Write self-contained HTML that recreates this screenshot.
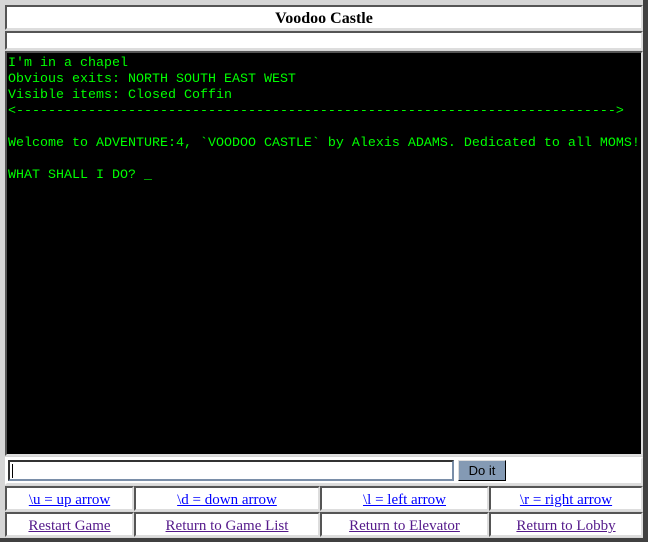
<!DOCTYPE html>
<html><head><style>
body{margin:0;width:648px;height:542px;background:#d6d6d6;position:relative;overflow:hidden;font-family:"Liberation Serif",serif}
.c{position:absolute;box-sizing:border-box;background:#fff;border-top:2px solid #555;border-left:2px solid #555;border-right:2px solid #ddd;border-bottom:2px solid #ddd}
.edgeR{position:absolute;left:643px;top:0;width:5px;height:542px;background:#404040}
.edgeB{position:absolute;left:0;top:538px;width:648px;height:4px;background:#404040}
.t{text-align:center;font-weight:bold;font-size:16px;line-height:24px}
pre{margin:0;position:absolute;left:8px;top:56px;color:#00ff00;font-family:"Liberation Mono",monospace;font-size:13.33px;line-height:16px}
.l{text-align:center;font-size:15px;line-height:25px}
a{color:#0000ff}
a.v{color:#551a8b}
</style></head><body>
<div class="c t" style="left:5px;top:5px;width:638px;height:25px">Voodoo Castle</div>
<div class="c" style="left:5px;top:31px;width:638px;height:19px"></div>
<div class="c" style="left:5px;top:51px;width:638px;height:405px;background:#000"></div>
<pre>I'm in a chapel
Obvious exits: NORTH SOUTH EAST WEST
Visible items: Closed Coffin
&lt;---------------------------------------------------------------------------&gt;

Welcome to ADVENTURE:4, `VOODOO CASTLE` by Alexis ADAMS. Dedicated to all MOMS!

WHAT SHALL I DO? _</pre>
<div class="c" style="left:5px;top:457px;width:638px;height:28px;border-color:#fff #ddd #ddd #fff"></div>
<div style="position:absolute;left:8px;top:460px;border:2px solid #333;border-right-color:#7a8ea8;border-bottom-color:#7a8ea8;background:#fff;box-sizing:content-box;width:442px;height:17px"><div style="position:absolute;left:2px;top:2px;width:1px;height:14px;background:#000"></div></div>
<div style="position:absolute;left:458px;top:460px;width:48px;height:21px;background:#849ab4;border:1px solid #000;border-top-color:#ddd;border-left-color:#ddd;box-sizing:border-box;font-family:'Liberation Sans',sans-serif;font-size:13px;text-align:center;line-height:19px">Do it</div>
<div class="c l" style="left:5px;top:486px;width:129px;height:25px"><a href="#">\u = up arrow</a></div>
<div class="c l" style="left:134px;top:486px;width:186px;height:25px"><a href="#">\d = down arrow</a></div>
<div class="c l" style="left:320px;top:486px;width:169px;height:25px"><a href="#">\l = left arrow</a></div>
<div class="c l" style="left:489px;top:486px;width:154px;height:25px"><a href="#">\r = right arrow</a></div>
<div class="c l" style="left:5px;top:512px;width:129px;height:25px"><a class="v" href="#">Restart Game</a></div>
<div class="c l" style="left:134px;top:512px;width:186px;height:25px"><a class="v" href="#">Return to Game List</a></div>
<div class="c l" style="left:320px;top:512px;width:169px;height:25px"><a class="v" href="#">Return to Elevator</a></div>
<div class="c l" style="left:489px;top:512px;width:154px;height:25px"><a class="v" href="#">Return to Lobby</a></div>
<div class="edgeR"></div><div class="edgeB"></div>
</body></html>
